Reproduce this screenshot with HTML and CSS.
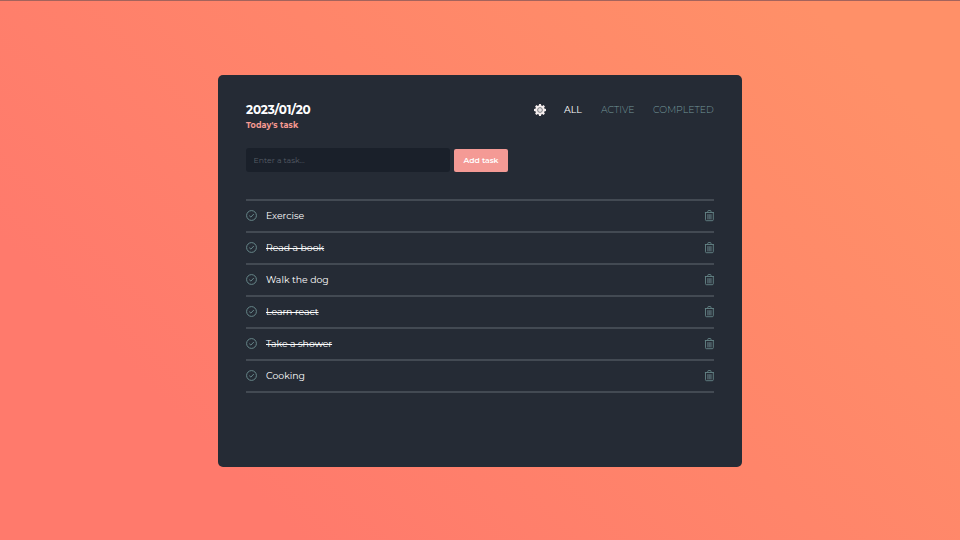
FILE: index.html
```
<!DOCTYPE html>
<html lang="en">
<head>
<meta charset="utf-8">
<title>Today's task</title>
<link rel="stylesheet" href="styles.css">
</head>
<body>
<svg class="symbols" aria-hidden="true">
  <symbol id="check" viewBox="0 0 12 12"><circle cx="5.5" cy="5.5" r="4.9"/><path d="M3.3 5.7 4.9 7.1 7.8 4"/></symbol>
  <symbol id="trash" viewBox="0 0 10 12"><path fill="#3e4a53" stroke="none" d="M3 4h4.8v5.6H3z"/><path d="M.9 2.5h9M3.8 2.3V1.3q0-.8.8-.8h1.6q.8 0 .8.8v1M1.5 2.6v7.1q0 1 1 1h5.8q1 0 1-1V2.6"/><path d="M3.9 4.4v4.6M5.4 4.4v4.6M6.9 4.4v4.6" stroke-width=".4"/></symbol>
</svg>
<main class="card">
  <header class="top">
    <div>
      <h1 class="date">2023/01/20</h1>
      <p class="subtitle">Today's task</p>
    </div>
    <nav class="filters">
      <svg class="gear" viewBox="0 0 12 12"><g fill="#f5eeee"><circle cx="6" cy="6" r="4.6"/><path id="t" d="M4.6 2 5.1 0h1.8l.5 2v8l-.5 2H5.1l-.5-2z"/><use href="#t" transform="rotate(45 6 6)"/><use href="#t" transform="rotate(90 6 6)"/><use href="#t" transform="rotate(135 6 6)"/></g><circle cx="6" cy="6" r="2.4" fill="#e4e0e1" stroke="#66696e" stroke-width=".8"/></svg>
      <a class="filter all">ALL</a>
      <a class="filter active">ACTIVE</a>
      <a class="filter completed">COMPLETED</a>
    </nav>
  </header>
  <form class="entry">
    <input class="field" type="text" placeholder="Enter a task...">
    <button class="add" type="button">Add task</button>
  </form>
  <ul class="tasks">
    <li class="task"><svg class="check"><use href="#check"/></svg><span class="name">Exercise</span><svg class="trash"><use href="#trash"/></svg></li>
    <li class="task"><svg class="check"><use href="#check"/></svg><span class="name done">Read a book</span><svg class="trash"><use href="#trash"/></svg></li>
    <li class="task"><svg class="check"><use href="#check"/></svg><span class="name">Walk the dog</span><svg class="trash"><use href="#trash"/></svg></li>
    <li class="task"><svg class="check"><use href="#check"/></svg><span class="name done">Learn react</span><svg class="trash"><use href="#trash"/></svg></li>
    <li class="task"><svg class="check"><use href="#check"/></svg><span class="name done">Take a shower</span><svg class="trash"><use href="#trash"/></svg></li>
    <li class="task"><svg class="check"><use href="#check"/></svg><span class="name">Cooking</span><svg class="trash"><use href="#trash"/></svg></li>
  </ul>
</main>
</body>
</html>
```
FILE: styles.css
```
* { box-sizing: border-box; margin: 0; padding: 0; }
body {
  height: 540px;
  overflow: hidden;
  border-top: 1px solid #a4635c;
  padding-top: 74px;
  background: linear-gradient(45deg, #ff7a6c 20%, #ff9068 90%);
  font-family: Montserrat, Inter, sans-serif;
}
.symbols { display: none; }
.card {
  width: 524px;
  height: 392.4px;
  margin: 0 auto;
  padding: 28px;
  border-radius: 5px;
  background: #252b35;
}
.top { display: flex; justify-content: space-between; height: 45px; }
.date { font-size: 12px; line-height: 14px; font-weight: 700; color: #fff; letter-spacing: -.2px; }
.subtitle { margin-top: 2px; font-size: 8px; line-height: 12px; font-weight: 700; color: #f79a92; letter-spacing: .1px; }
.filters { display: flex; height: 14px; align-items: center; }
.gear { width: 12px; height: 12px; margin-right: 18px; }
.filter { font-size: 9.4px; line-height: 14px; font-weight: 300; color: #74989b; white-space: nowrap; }
.all { width: 37px; color: #fff; font-weight: 400; }
.active { width: 52px; }
.completed { width: 61px; }
.entry { display: flex; gap: 4px; height: 24px; }
.field {
  width: 204px;
  height: 24px;
  padding: 0 7.5px;
  border: 0;
  border-radius: 3px;
  background: #1a202a;
  font: 400 7.8px Montserrat, Inter, sans-serif;
}
.field::placeholder { color: #555c66; }
.add {
  width: 54px;
  height: 23px;
  margin-top: .5px;
  border: 0;
  border-radius: 2px;
  background: #f49a95;
  color: #fff;
  font: 600 7.7px Montserrat, Inter, sans-serif;
}
.tasks { margin-top: 27px; border-top: 2px solid #434a53; list-style: none; }
.task { display: flex; align-items: center; height: 32px; border-bottom: 2px solid #434a53; }
.check { width: 12px; height: 12px; fill: none; stroke: #6d9092; stroke-width: .9; }
.name { margin-left: 8px; font-size: 9.35px; line-height: 14px; color: #fff; }
.done { text-decoration: line-through; }
.trash { width: 10px; height: 12px; margin-left: auto; fill: none; stroke: #6d9092; stroke-width: .8; }
```
